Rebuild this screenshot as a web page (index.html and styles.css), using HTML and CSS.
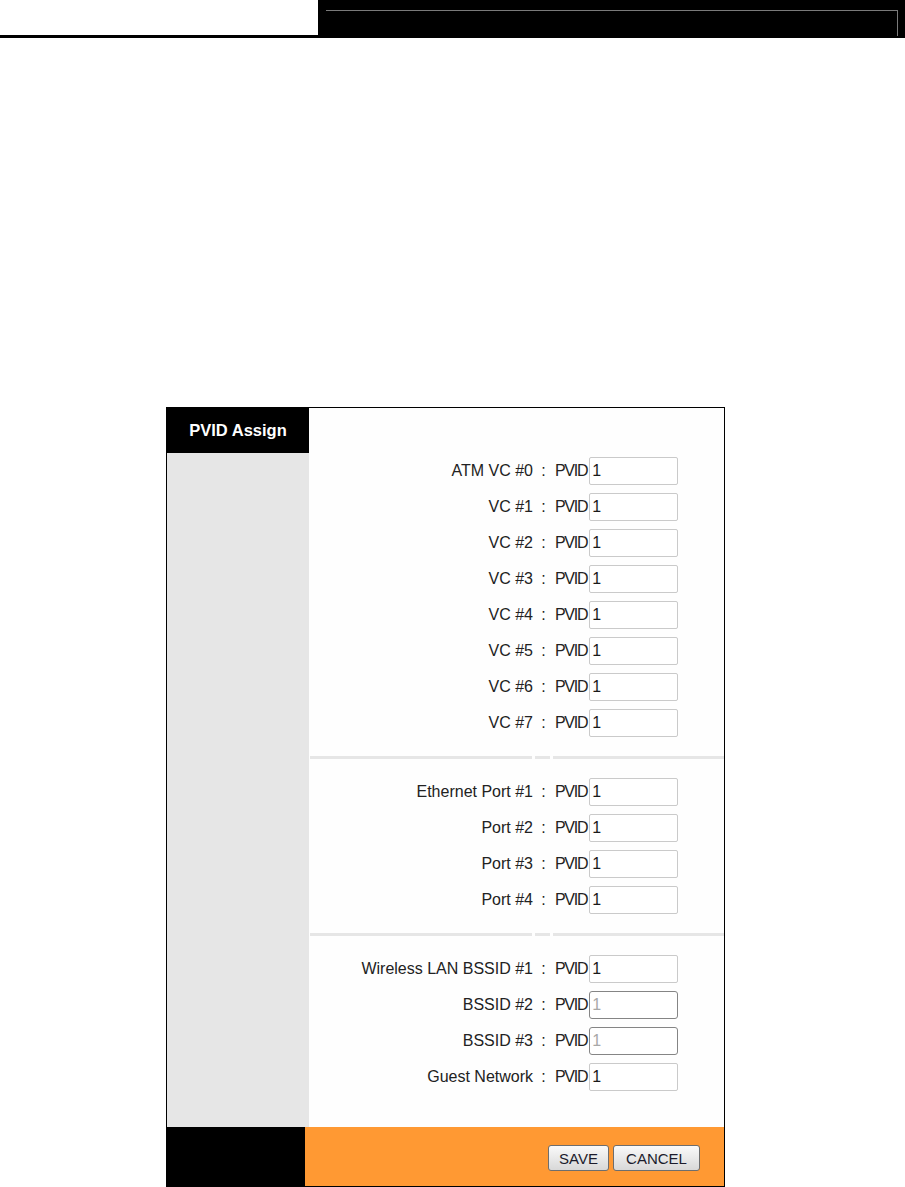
FILE: index.html
```html
<!DOCTYPE html>
<html>
<head>
<meta charset="utf-8">
<title>PVID Assign</title>
<link rel="stylesheet" href="styles.css">
</head>
<body>
<div class="topbar">
  <div class="topbar-left"></div>
  <div class="topbar-right"><div class="topbar-inner"></div></div>
</div>

<div class="panel">
  <div class="side-head">PVID Assign</div>
  <div class="main-head"></div>

  <div class="side-body"></div>
  <div class="main-body">
    <div class="section">
      <div class="row"><span class="label">ATM VC #0</span><span class="colon">:</span><span class="value"><span class="pvid">PVID</span><input class="field" type="text" value="1"></span></div>
      <div class="row"><span class="label">VC #1</span><span class="colon">:</span><span class="value"><span class="pvid">PVID</span><input class="field" type="text" value="1"></span></div>
      <div class="row"><span class="label">VC #2</span><span class="colon">:</span><span class="value"><span class="pvid">PVID</span><input class="field" type="text" value="1"></span></div>
      <div class="row"><span class="label">VC #3</span><span class="colon">:</span><span class="value"><span class="pvid">PVID</span><input class="field" type="text" value="1"></span></div>
      <div class="row"><span class="label">VC #4</span><span class="colon">:</span><span class="value"><span class="pvid">PVID</span><input class="field" type="text" value="1"></span></div>
      <div class="row"><span class="label">VC #5</span><span class="colon">:</span><span class="value"><span class="pvid">PVID</span><input class="field" type="text" value="1"></span></div>
      <div class="row"><span class="label">VC #6</span><span class="colon">:</span><span class="value"><span class="pvid">PVID</span><input class="field" type="text" value="1"></span></div>
      <div class="row"><span class="label">VC #7</span><span class="colon">:</span><span class="value"><span class="pvid">PVID</span><input class="field" type="text" value="1"></span></div>
    </div>
    <div class="divider"><span class="seg seg-a"></span><span class="seg seg-b"></span><span class="seg seg-c"></span></div>
    <div class="section">
      <div class="row"><span class="label">Ethernet Port #1</span><span class="colon">:</span><span class="value"><span class="pvid">PVID</span><input class="field" type="text" value="1"></span></div>
      <div class="row"><span class="label">Port #2</span><span class="colon">:</span><span class="value"><span class="pvid">PVID</span><input class="field" type="text" value="1"></span></div>
      <div class="row"><span class="label">Port #3</span><span class="colon">:</span><span class="value"><span class="pvid">PVID</span><input class="field" type="text" value="1"></span></div>
      <div class="row"><span class="label">Port #4</span><span class="colon">:</span><span class="value"><span class="pvid">PVID</span><input class="field" type="text" value="1"></span></div>
    </div>
    <div class="divider"><span class="seg seg-a"></span><span class="seg seg-b"></span><span class="seg seg-c"></span></div>
    <div class="section">
      <div class="row"><span class="label">Wireless LAN BSSID #1</span><span class="colon">:</span><span class="value"><span class="pvid">PVID</span><input class="field" type="text" value="1"></span></div>
      <div class="row"><span class="label">BSSID #2</span><span class="colon">:</span><span class="value"><span class="pvid">PVID</span><input class="field" type="text" value="1" disabled></span></div>
      <div class="row"><span class="label">BSSID #3</span><span class="colon">:</span><span class="value"><span class="pvid">PVID</span><input class="field" type="text" value="1" disabled></span></div>
      <div class="row"><span class="label">Guest Network</span><span class="colon">:</span><span class="value"><span class="pvid">PVID</span><input class="field" type="text" value="1"></span></div>
    </div>
  </div>

  <div class="side-foot"></div>
  <div class="main-foot">
    <button class="btn btn-save" type="button">SAVE</button>
    <button class="btn btn-cancel" type="button">CANCEL</button>
  </div>
</div>
</body>
</html>
```

FILE: styles.css
```css
html, body {
  margin: 0;
  padding: 0;
  background: #ffffff;
  font-family: "Liberation Sans", Arial, sans-serif;
}

.topbar {
  display: flex;
  height: 38px;
}
.topbar-left {
  width: 318px;
  height: 35px;
  border-bottom: 3px solid #000;
}
.topbar-right {
  flex: 1;
  background: #000;
  padding: 10px 7px 0 8px;
}
.topbar-inner {
  height: 25px;
  border-top: 1px solid #7a7a7a;
  border-right: 1px solid #7a7a7a;
}

.panel {
  margin: 369px 0 0 166px;
  width: 557px;
  border: 1px solid #000;
  display: grid;
  grid-template-columns: 142px 415px;
  grid-template-rows: 45px 674px 59px;
}

.side-head {
  background: #000;
  color: #fff;
  font-weight: bold;
  font-size: 16.5px;
  display: flex;
  align-items: center;
  justify-content: center;
  padding-bottom: 1px;
}
.main-head {
  background: #fefefe;
}
.side-body {
  background: #e6e6e6;
}
.main-body {
  background: #fefefe;
  display: flex;
  flex-direction: column;
}

.row {
  display: grid;
  grid-template-columns: 226px 17px 1fr;
  align-items: center;
  height: 36px;
  color: #222;
}
.label {
  font-size: 16px;
  text-align: right;
  padding-right: 2px;
  white-space: nowrap;
}
.colon {
  font-size: 16px;
  text-align: center;
}
.value {
  display: flex;
  align-items: center;
  padding-left: 3px;
}
.pvid {
  font-size: 16px;
  letter-spacing: -1.3px;
}
.field {
  box-sizing: border-box;
  width: 89px;
  height: 28px;
  margin: 0 0 0 2px;
  padding: 0 2px 1px;
  border: 1px solid #cacaca;
  border-radius: 2px;
  background: #fff;
  font-family: "Liberation Sans", Arial, sans-serif;
  font-size: 16px;
  color: #1a1a1a;
  outline: none;
}
.field:disabled {
  border-color: #858585;
  border-radius: 3px;
  color: #a8a8a8;
  background: #fff;
}

.divider {
  display: flex;
  gap: 3px;
  height: 3px;
  margin: 15px 0;
  padding-left: 1px;
}
.seg {
  background: #e6e6e6;
}
.seg-a { width: 222px; }
.seg-b { width: 15px; }
.seg-c { flex: 1; }

.side-foot {
  background: linear-gradient(to right, #000 138px, #ff9933 138px);
}
.main-foot {
  background: #ff9933;
  display: flex;
  justify-content: flex-end;
  align-items: flex-start;
  gap: 4px;
  padding: 18px 24px 0 0;
}
.btn {
  height: 26px;
  padding: 0;
  border: 1px solid #6e6e6e;
  border-radius: 3px;
  background: linear-gradient(#fafafa, #e9e9e9 50%, #d8d8d8);
  font-family: "Liberation Sans", Arial, sans-serif;
  font-size: 15px;
  color: #1c1c2c;
}
.btn-save { width: 61px; }
.btn-cancel { width: 87px; }
```
